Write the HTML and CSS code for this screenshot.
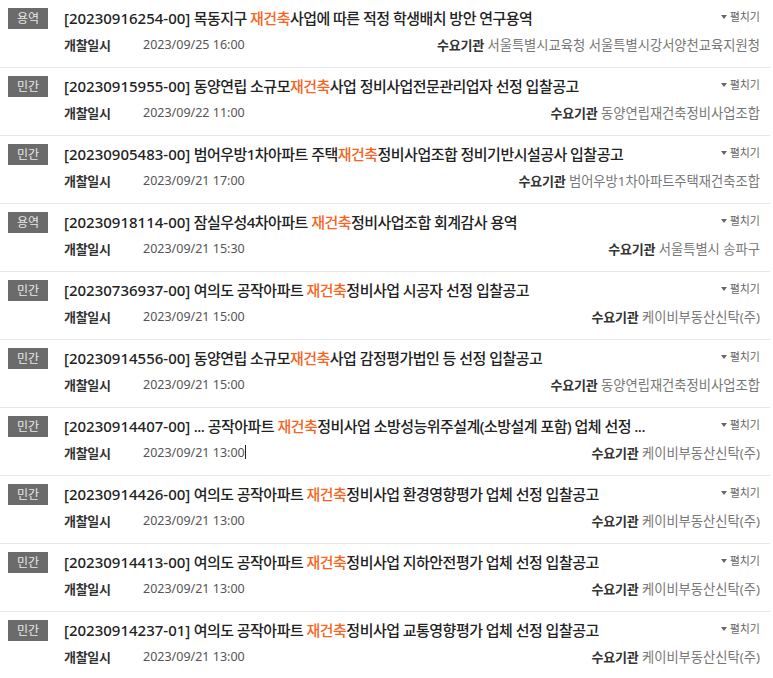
FILE: index.html
```html
<!DOCTYPE html>
<html lang="ko">
<head>
<meta charset="utf-8">
<title>입찰공고 목록</title>
<link rel="stylesheet" href="styles.css">
</head>
<body>
<ul class="list">
  <li class="item">
    <span class="badge">용역</span>
    <div class="body">
      <div class="line1"><p class="title"><span class="no">[20230916254-00]</span> 목동지구 <em>재건축</em>사업에 따른 적정 학생배치 방안 연구용역</p><span class="toggle"><i class="tri"></i>펼치기</span></div>
      <div class="line2"><span class="lbl-date">개찰일시</span><span class="date">2023/09/25 16:00</span><span class="org"><b>수요기관</b> 서울특별시교육청 서울특별시강서양천교육지원청</span></div>
    </div>
  </li>
  <li class="item">
    <span class="badge">민간</span>
    <div class="body">
      <div class="line1"><p class="title"><span class="no">[20230915955-00]</span> 동양연립 소규모<em>재건축</em>사업 정비사업전문관리업자 선정 입찰공고</p><span class="toggle"><i class="tri"></i>펼치기</span></div>
      <div class="line2"><span class="lbl-date">개찰일시</span><span class="date">2023/09/22 11:00</span><span class="org"><b>수요기관</b> 동양연립재건축정비사업조합</span></div>
    </div>
  </li>
  <li class="item">
    <span class="badge">민간</span>
    <div class="body">
      <div class="line1"><p class="title"><span class="no">[20230905483-00]</span> 범어우방1차아파트 주택<em>재건축</em>정비사업조합 정비기반시설공사 입찰공고</p><span class="toggle"><i class="tri"></i>펼치기</span></div>
      <div class="line2"><span class="lbl-date">개찰일시</span><span class="date">2023/09/21 17:00</span><span class="org"><b>수요기관</b> 범어우방1차아파트주택재건축조합</span></div>
    </div>
  </li>
  <li class="item">
    <span class="badge">용역</span>
    <div class="body">
      <div class="line1"><p class="title"><span class="no">[20230918114-00]</span> 잠실우성4차아파트 <em>재건축</em>정비사업조합 회계감사 용역</p><span class="toggle"><i class="tri"></i>펼치기</span></div>
      <div class="line2"><span class="lbl-date">개찰일시</span><span class="date">2023/09/21 15:30</span><span class="org"><b>수요기관</b> 서울특별시 송파구</span></div>
    </div>
  </li>
  <li class="item">
    <span class="badge">민간</span>
    <div class="body">
      <div class="line1"><p class="title"><span class="no">[20230736937-00]</span> 여의도 공작아파트 <em>재건축</em>정비사업 시공자 선정 입찰공고</p><span class="toggle"><i class="tri"></i>펼치기</span></div>
      <div class="line2"><span class="lbl-date">개찰일시</span><span class="date">2023/09/21 15:00</span><span class="org"><b>수요기관</b> 케이비부동산신탁(주)</span></div>
    </div>
  </li>
  <li class="item">
    <span class="badge">민간</span>
    <div class="body">
      <div class="line1"><p class="title"><span class="no">[20230914556-00]</span> 동양연립 소규모<em>재건축</em>사업 감정평가법인 등 선정 입찰공고</p><span class="toggle"><i class="tri"></i>펼치기</span></div>
      <div class="line2"><span class="lbl-date">개찰일시</span><span class="date">2023/09/21 15:00</span><span class="org"><b>수요기관</b> 동양연립재건축정비사업조합</span></div>
    </div>
  </li>
  <li class="item">
    <span class="badge">민간</span>
    <div class="body">
      <div class="line1"><p class="title"><span class="no">[20230914407-00]</span> ... 공작아파트 <em>재건축</em>정비사업 소방성능위주설계(소방설계 포함) 업체 선정 ...</p><span class="toggle"><i class="tri"></i>펼치기</span></div>
      <div class="line2"><span class="lbl-date">개찰일시</span><span class="date">2023/09/21 13:00<span class="caret"></span></span><span class="org"><b>수요기관</b> 케이비부동산신탁(주)</span></div>
    </div>
  </li>
  <li class="item">
    <span class="badge">민간</span>
    <div class="body">
      <div class="line1"><p class="title"><span class="no">[20230914426-00]</span> 여의도 공작아파트 <em>재건축</em>정비사업 환경영향평가 업체 선정 입찰공고</p><span class="toggle"><i class="tri"></i>펼치기</span></div>
      <div class="line2"><span class="lbl-date">개찰일시</span><span class="date">2023/09/21 13:00</span><span class="org"><b>수요기관</b> 케이비부동산신탁(주)</span></div>
    </div>
  </li>
  <li class="item">
    <span class="badge">민간</span>
    <div class="body">
      <div class="line1"><p class="title"><span class="no">[20230914413-00]</span> 여의도 공작아파트 <em>재건축</em>정비사업 지하안전평가 업체 선정 입찰공고</p><span class="toggle"><i class="tri"></i>펼치기</span></div>
      <div class="line2"><span class="lbl-date">개찰일시</span><span class="date">2023/09/21 13:00</span><span class="org"><b>수요기관</b> 케이비부동산신탁(주)</span></div>
    </div>
  </li>
  <li class="item">
    <span class="badge">민간</span>
    <div class="body">
      <div class="line1"><p class="title"><span class="no">[20230914237-01]</span> 여의도 공작아파트 <em>재건축</em>정비사업 교통영향평가 업체 선정 입찰공고</p><span class="toggle"><i class="tri"></i>펼치기</span></div>
      <div class="line2"><span class="lbl-date">개찰일시</span><span class="date">2023/09/21 13:00</span><span class="org"><b>수요기관</b> 케이비부동산신탁(주)</span></div>
    </div>
  </li>
</ul>
</body>
</html>
```

FILE: styles.css
```css
* { box-sizing: border-box; }
html, body { margin: 0; padding: 0; background: #fff; }
body {
  font-family: "Noto Sans", "Noto Sans CJK KR", sans-serif;
  color: #222;
}
.list {
  list-style: none;
  margin: 0;
  padding: 0;
  width: 770px;
}
.item {
  display: flex;
  align-items: flex-start;
  height: 68px;
  padding: 8px 10px 0 8px;
  border-bottom: 1px solid #e6e6e6;
}
.badge {
  flex: none;
  width: 40px;
  height: 21px;
  margin-right: 16px;
  background: #6b6b6b;
  color: #e8e8e8;
  font-size: 12px;
  line-height: 21px;
  text-align: center;
}
.body {
  flex: 1;
  min-width: 0;
}
.line1 {
  display: flex;
  align-items: flex-start;
  height: 22px;
}
.title {
  flex: 1;
  margin: 0;
  font-size: 15px;
  line-height: 20px;
  font-weight: 500;
  color: #222;
  letter-spacing: -0.53px;
  white-space: nowrap;
  overflow: hidden;
}
.title .no {
  letter-spacing: 0;
}
.title em {
  font-style: normal;
  color: #f7641e;
}
.toggle {
  flex: none;
  display: flex;
  align-items: center;
  font-size: 11px;
  line-height: 16px;
  color: #666;
  margin-top: 1px;
}
.tri {
  display: inline-block;
  width: 0;
  height: 0;
  border-left: 3px solid transparent;
  border-right: 3px solid transparent;
  border-top: 4px solid #666;
  margin-right: 3px;
}
.line2 {
  display: flex;
  align-items: center;
  margin-top: 6px;
  font-size: 13px;
  line-height: 18px;
}
.lbl-date {
  width: 79px;
  font-weight: 700;
  color: #333;
  letter-spacing: -0.3px;
}
.date {
  color: #555;
  font-size: 12.5px;
}
.caret {
  display: inline-block;
  width: 1px;
  height: 14px;
  background: #222;
  vertical-align: -2px;
}
.org {
  margin-left: auto;
  color: #777;
  font-size: 13.3px;
}
.org b {
  color: #333;
  font-weight: 700;
  font-size: 13px;
  letter-spacing: -0.2px;
}
```
